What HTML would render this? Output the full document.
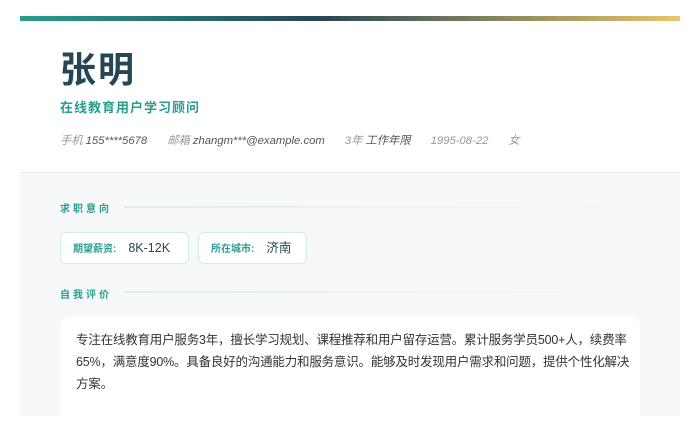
<!DOCTYPE html>
<html><head><meta charset="utf-8"><style>
*{margin:0;padding:0;box-sizing:border-box}
body{width:700px;height:400px;overflow:hidden;background:#fff;font-family:"Liberation Sans","Noto Sans CJK SC",sans-serif;position:relative}
.card{position:absolute;left:20px;top:16px;width:660px;height:400px;background:#f6f8f9}
.bar{height:5px;background:linear-gradient(90deg,#2a9d8f 0%,#264653 45%,#e9c46a 100%)}
.head{background:#fff;height:152px;border-bottom:1px solid #e8ecef;position:relative}
.name{position:absolute;left:40px;top:27px;font-size:36px;font-weight:bold;color:#264653;letter-spacing:2px;line-height:44px}
.sub{position:absolute;left:40px;top:76px;font-size:13px;font-weight:bold;color:#2a9d8f;letter-spacing:1px}
.meta{position:absolute;left:40px;top:111px;font-size:11.3px;font-style:italic;color:#555;white-space:nowrap}
.meta span{margin-right:20px}.meta i{color:#999;margin-right:3px}
.st{position:absolute;left:40px;font-size:10px;font-weight:bold;color:#2a9d8f;letter-spacing:3px}
.ln{position:absolute;left:104px;width:500px;height:2px;background:linear-gradient(90deg,#dceeed,rgba(220,238,237,0))}
.tag{position:absolute;top:216px;height:32px;background:#fff;border:1px solid #cfece8;border-radius:6px;font-size:12.5px;color:#264653;padding:0 12px;line-height:30px;white-space:nowrap}
.tag b{font-size:10px;color:#2a9d8f;margin-right:12px}
.txt{position:absolute;left:40px;top:301px;width:580px;height:120px;background:#fff;border-radius:8px;padding:12px 16px;font-size:12.5px;line-height:22px;color:#333;white-space:nowrap;letter-spacing:-0.2px}
</style></head><body>
<div class="card">
<div class="bar"></div>
<div class="head">
<div class="name">张明</div>
<div class="sub">在线教育用户学习顾问</div>
<div class="meta"><span><i>手机</i>155****5678</span><span><i>邮箱</i>zhangm***@example.com</span><span><i>3年</i>工作年限</span><span style="color:#999">1995-08-22</span><span style="color:#999">女</span></div>
</div>
<div class="st" style="top:184px">求职意向</div><div class="ln" style="top:190px"></div>
<div class="tag" style="left:40px;width:129px"><b>期望薪资:</b>8K-12K</div>
<div class="tag" style="left:178px;width:109px"><b>所在城市:</b>济南</div>
<div class="st" style="top:270px">自我评价</div><div class="ln" style="top:275px"></div>
<div class="txt">专注在线教育用户服务3年，擅长学习规划、课程推荐和用户留存运营。累计服务学员500+人，续费率<br>65%，满意度90%。具备良好的沟通能力和服务意识。能够及时发现用户需求和问题，提供个性化解决<br>方案。</div>
</div>
</body></html>
